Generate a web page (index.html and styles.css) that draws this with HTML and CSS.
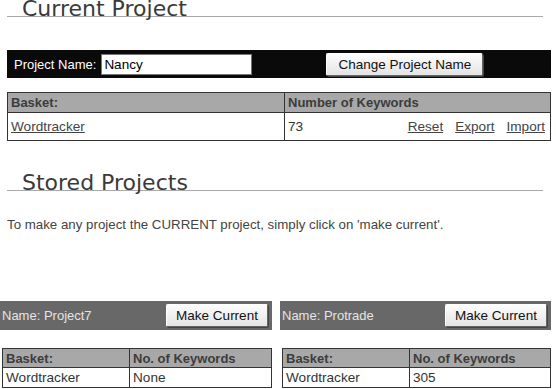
FILE: index.html
```html
<!DOCTYPE html>
<html lang="en">
<head>
  <meta charset="UTF-8">
  <title>Projects</title>
  <link rel="stylesheet" href="styles.css">
</head>
<body>
  <h2 class="section-title">Current Project</h2>

  <form class="name-bar">
    <label for="project-name">Project Name:</label>
    <input id="project-name" type="text" value="Nancy">
    <button type="button" class="btn btn-change">Change Project Name</button>
  </form>

  <table class="grid current">
    <tr>
      <th class="col-basket">Basket:</th>
      <th>Number of Keywords</th>
    </tr>
    <tr>
      <td><a href="#">Wordtracker</a></td>
      <td>
        <div class="count-cell">
          <span>73</span>
          <span class="actions">
            <a href="#">Reset</a>
            <a href="#">Export</a>
            <a href="#">Import</a>
          </span>
        </div>
      </td>
    </tr>
  </table>

  <h2 class="section-title stored-title">Stored Projects</h2>
  <p class="hint">To make any project the CURRENT project, simply click on 'make current'.</p>

  <div class="stored">
    <div class="stored-project">
      <div class="stored-bar">
        <span>Name: Project7</span>
        <button type="button" class="btn">Make Current</button>
      </div>
      <table class="grid small">
        <tr><th class="col-small">Basket:</th><th>No. of Keywords</th></tr>
        <tr><td>Wordtracker</td><td>None</td></tr>
      </table>
    </div>
    <div class="stored-project">
      <div class="stored-bar">
        <span>Name: Protrade</span>
        <button type="button" class="btn">Make Current</button>
      </div>
      <table class="grid small">
        <tr><th class="col-small">Basket:</th><th>No. of Keywords</th></tr>
        <tr><td>Wordtracker</td><td>305</td></tr>
      </table>
    </div>
  </div>
</body>
</html>
```
FILE: styles.css
```css
body {
  margin: 0;
  font-family: "Liberation Sans", Arial, sans-serif;
  font-size: 13px;
  color: #333;
  background: #fff;
  width: 556px;
}
.section-title {
  margin: 0 13px 0 7px;
  padding: 2px 0 0 15px;
  font-family: "DejaVu Sans", Verdana, sans-serif;
  font-weight: normal;
  font-size: 22px;
  line-height: 14px;
  color: #3a3a3a;
  border-bottom: 1px solid #aaa;
}
.name-bar {
  display: flex;
  align-items: center;
  margin: 33px 5px 0 7px;
  height: 28px;
  padding-left: 7px;
  background: #0a0a0a;
  color: #fff;
}
.name-bar label {
  margin-right: 5px;
}
.name-bar input {
  box-sizing: border-box;
  width: 151px;
  height: 21px;
  margin: 0;
  padding: 0 2px;
  border: 1px solid #777;
  font-family: inherit;
  font-size: 13.5px;
  color: #000;
}
.btn {
  box-sizing: border-box;
  height: 23px;
  padding: 0 10px;
  font-family: "Liberation Sans", Arial, sans-serif;
  font-size: 13.5px;
  color: #111;
  background: linear-gradient(#fdfdfd, #e4e4e4);
  border: 1px solid #fff;
  border-right-color: #666;
  border-bottom-color: #666;
  border-radius: 2px;
  box-shadow: 1px 1px 0 #444;
}
.btn-change {
  width: 157px;
  margin-left: 74px;
}
.grid {
  border-collapse: collapse;
  border: 1px solid #333;
}
.grid th,
.grid td {
  border: 1px solid #333;
  text-align: left;
  padding: 0 3px;
}
.grid th {
  background: #a8a8a8;
  font-weight: bold;
  color: #3c3c3c;
}
.grid td {
  font-size: 13.6px;
}
.grid a {
  color: #444;
}
.current {
  margin: 14px 5px 0 7px;
  width: 544px;
}
.current th {
  height: 19px;
}
.current td {
  height: 27px;
}
.col-basket {
  width: 270px;
}
.count-cell {
  display: flex;
  justify-content: space-between;
  align-items: center;
}
.actions {
  display: flex;
  gap: 12px;
  padding-right: 2px;
}
.stored-title {
  margin-top: 33px;
}
.hint {
  margin: 26px 0 0 7px;
  font-size: 13.3px;
  color: #444;
}
.stored {
  display: grid;
  grid-template-columns: 272px 271px;
  gap: 8px;
  margin: 69px 0 0 0;
}
.stored-bar {
  display: flex;
  justify-content: space-between;
  align-items: center;
  height: 29px;
  padding: 0 4px 0 2px;
  background: #686868;
  color: #e4e4e4;
}
.stored-bar .btn {
  width: 102px;
  padding: 0;
}
.small {
  margin: 18px 0 0 2px;
  width: calc(100% - 2px);
}
.small th {
  height: 18px;
}
.small td {
  height: 19px;
  background: #fff;
}
.col-small {
  width: 120px;
}
```
